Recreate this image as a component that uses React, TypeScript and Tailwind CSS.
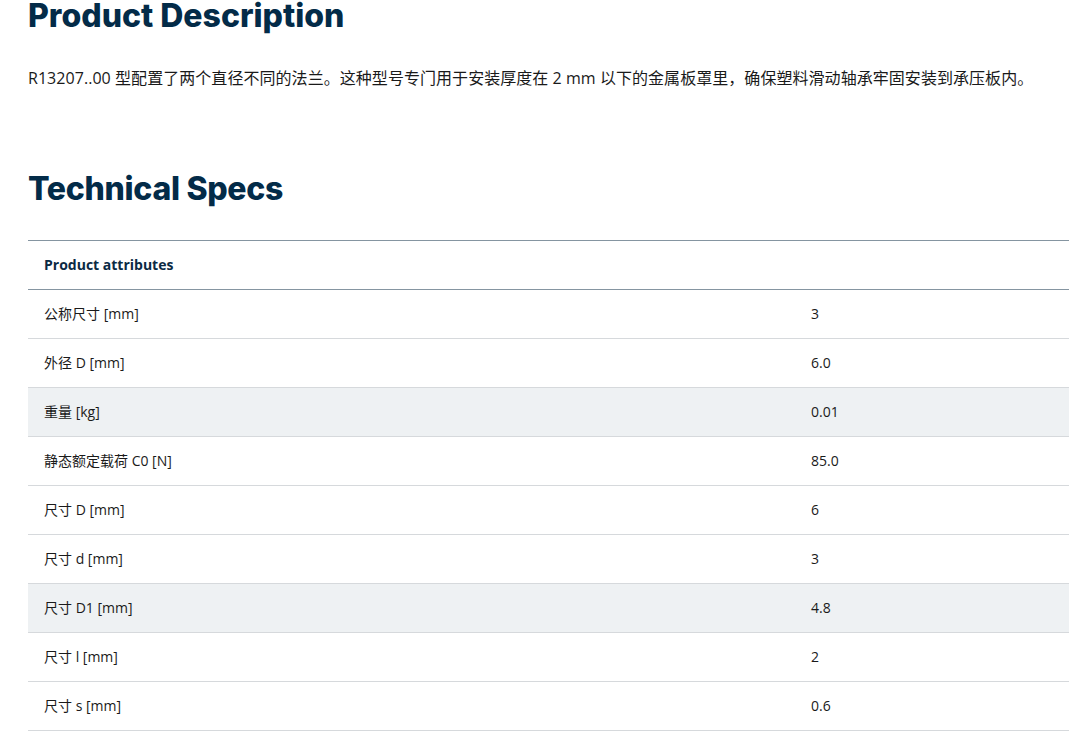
import React from "react";

const rows: [string, string][] = [
  ["公称尺寸 [mm]", "3"],
  ["外径 D [mm]", "6.0"],
  ["重量 [kg]", "0.01"],
  ["静态额定载荷 C0 [N]", "85.0"],
  ["尺寸 D [mm]", "6"],
  ["尺寸 d [mm]", "3"],
  ["尺寸 D1 [mm]", "4.8"],
  ["尺寸 l [mm]", "2"],
  ["尺寸 s [mm]", "0.6"],
];

const headingFont = { fontFamily: 'Inter, "Liberation Sans", sans-serif' };

export default function App() {
  return (
    <div
      className="h-[742px] w-full overflow-hidden bg-white pl-[28px]"
      style={{ fontFamily: '"Open Sans", "Noto Sans CJK SC", sans-serif' }}
    >
      <h1 className="m-0 text-[32px] font-extrabold leading-[32px] tracking-[0px] text-[#032b48]" style={headingFont}>
        Product Description
      </h1>
      <p className="mt-[34px] text-[16px] leading-[24px] tracking-[0.05px] text-[#1a1a1a]">
        R13207..00 型配置了两个直径不同的法兰。这种型号专门用于安装厚度在 2 mm 以下的金属板罩里，确保塑料滑动轴承牢固安装到承压板内。
      </p>
      <h2 className="mt-[83px] text-[32px] font-extrabold leading-[32px] tracking-[-0.3px] text-[#032b48]" style={headingFont}>
        Technical Specs
      </h2>
      <div className="mt-[35px] w-[1041px]">
        <div className="flex h-[50px] items-center border-y border-[#8595a1] px-4 pb-[2px] text-[14px] font-bold text-[#0b2a44]">
          Product attributes
        </div>
        {rows.map(([k, v], i) => (
          <div
            key={i}
            className={`flex h-[49px] items-center border-b border-[#d6d9dc] pb-[2px] text-[14px] text-[#1a1a1a] ${
              i === 2 || i === 6 ? "bg-[#eef1f3]" : "bg-white"
            }`}
          >
            <div className="w-[767px] px-4">{k}</div>
            <div className="px-4">{v}</div>
          </div>
        ))}
      </div>
    </div>
  );
}
